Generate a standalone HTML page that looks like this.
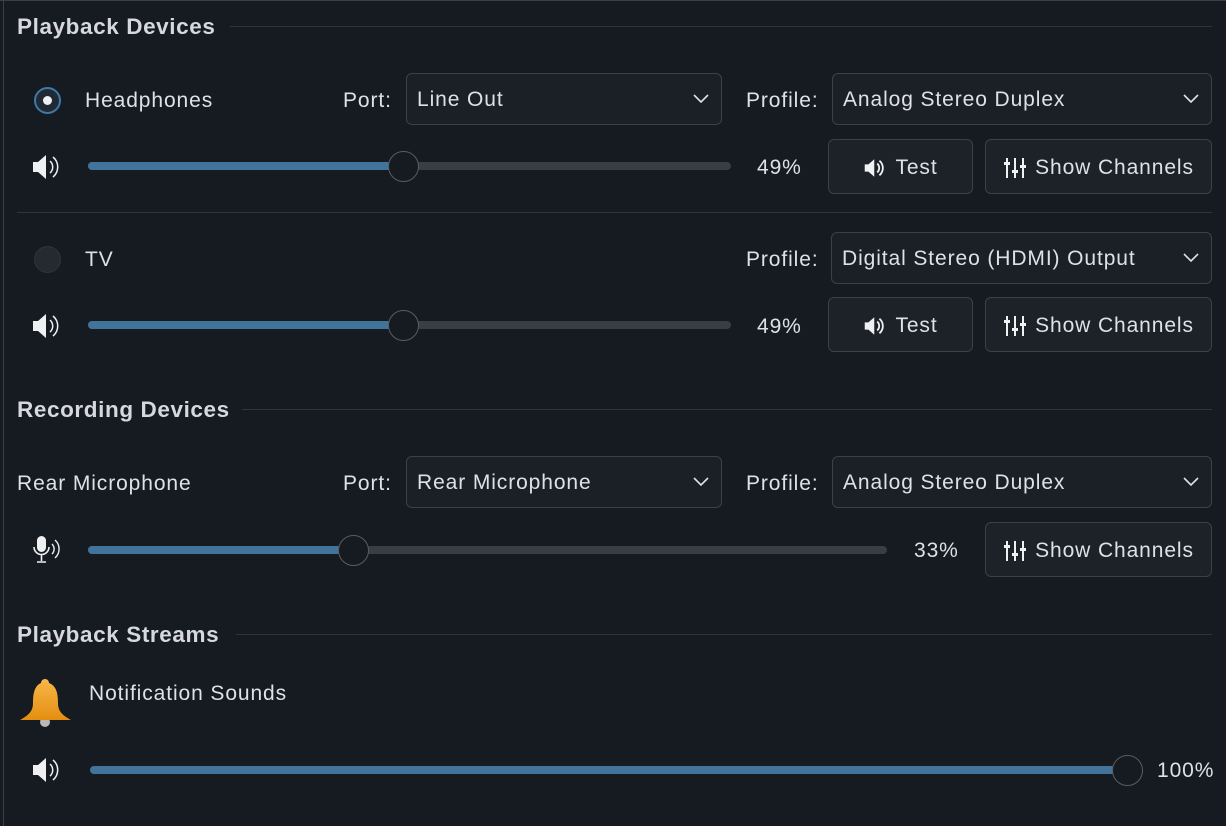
<!DOCTYPE html>
<html><head><style>
*{margin:0;padding:0;box-sizing:border-box}
body{width:1226px;height:826px;background:#161a21;position:relative;overflow:hidden;font-family:"Liberation Sans",sans-serif;color:#dfe1e4;font-size:21px;letter-spacing:0.9px}
.a{position:absolute}
.t{position:absolute;line-height:30px;white-space:nowrap;margin-top:1px}
.h{font-weight:bold;color:#d6d8db;font-size:22.5px;letter-spacing:0.6px}
.line{position:absolute;height:1px;background:#2f3640}
.combo{position:absolute;border:1px solid #3c4149;border-radius:6px;background:#1b1f26}
.combo span{position:absolute;left:10px;top:50%;transform:translateY(-50%);white-space:nowrap;margin-top:1px}
.combo svg{position:absolute;right:12px;top:50%;margin-top:-5px}
.btn{position:absolute;border:1px solid #3c4149;border-radius:6px;background:#1d2128;display:flex;align-items:center;justify-content:center;gap:8px;white-space:nowrap;padding-top:2px}
.groove{position:absolute;height:8px;border-radius:4px;background:#3a3d43}
.fill{position:absolute;height:8px;border-radius:4px;background:#41739b}
.handle{position:absolute;width:31px;height:31px;border-radius:50%;background:#161a21;border:1.5px solid #595d63}
</style></head><body>
<div class="a" style="left:0;top:0;width:4px;height:826px;border-right:1px solid #3a3f46"></div>
<div class="a" style="left:0;top:0;width:1226px;height:1px;background:#3a3f46"></div>

<div class="t h" style="left:17px;top:11px">Playback Devices</div>
<div class="line" style="left:230px;top:26px;width:982px"></div>

<div class="a" style="left:34px;top:87px;width:27px;height:27px;border-radius:50%;border:2px solid #3d7aa6;background:#1f2a35"></div>
<div class="a" style="left:43px;top:96px;width:9px;height:9px;border-radius:50%;background:#eef0f2"></div>
<div class="t" style="left:85px;top:85px">Headphones</div>
<div class="t" style="left:343px;top:85px">Port:</div>
<div class="combo" style="left:406px;top:73px;width:316px;height:52px"><span>Line Out</span><svg width="16" height="10"><path d="M1 1L8 8L15 1" stroke="#dfe1e4" stroke-width="1.6" fill="none"/></svg></div>
<div class="t" style="left:746px;top:85px">Profile:</div>
<div class="combo" style="left:832px;top:73px;width:380px;height:52px"><span>Analog Stereo Duplex</span><svg width="16" height="10"><path d="M1 1L8 8L15 1" stroke="#dfe1e4" stroke-width="1.6" fill="none"/></svg></div>

<svg class="a" style="left:31px;top:152px" width="32" height="30" viewBox="0 0 32 30"><path d="M2 10h5l8-7v24l-8-7H2z" fill="#eef0f2"/><path d="M19 9a8 8 0 0 1 0 12M22 5a13 13 0 0 1 0 20" stroke="#eef0f2" stroke-width="1.5" fill="none"/></svg>
<div class="groove" style="left:88px;top:162px;width:643px"></div>
<div class="fill" style="left:88px;top:162px;width:315px"></div>
<div class="handle" style="left:388px;top:151px"></div>
<div class="t" style="left:757px;top:152px">49%</div>
<div class="btn" style="left:828px;top:139px;width:145px;height:55px"><svg width="24" height="22" viewBox="0 0 32 30"><path d="M2 10h5l8-7v24l-8-7H2z" fill="#eef0f2"/><path d="M19 9a8 8 0 0 1 0 12M22 5a13 13 0 0 1 0 20" stroke="#eef0f2" stroke-width="2.5" fill="none"/></svg>Test</div>
<div class="btn" style="left:985px;top:139px;width:227px;height:55px"><svg width="24" height="22" viewBox="0 0 24 22"><path d="M4 1v20M12 1v20M20 1v20" stroke="#eef0f2" stroke-width="2"/><rect x="1" y="5" width="6" height="3" fill="#eef0f2"/><rect x="9" y="13" width="6" height="3" fill="#eef0f2"/><rect x="17" y="8" width="6" height="3" fill="#eef0f2"/></svg>Show Channels</div>

<div class="line" style="left:17px;top:212px;width:1195px;background:#2c3540"></div>

<div class="a" style="left:34px;top:246px;width:27px;height:27px;border-radius:50%;border:1px solid #30343b;background:#252930"></div>
<div class="t" style="left:85px;top:244px">TV</div>
<div class="t" style="left:746px;top:244px">Profile:</div>
<div class="combo" style="left:831px;top:232px;width:381px;height:52px"><span>Digital Stereo (HDMI) Output</span><svg width="16" height="10"><path d="M1 1L8 8L15 1" stroke="#dfe1e4" stroke-width="1.6" fill="none"/></svg></div>

<svg class="a" style="left:31px;top:311px" width="32" height="30" viewBox="0 0 32 30"><path d="M2 10h5l8-7v24l-8-7H2z" fill="#eef0f2"/><path d="M19 9a8 8 0 0 1 0 12M22 5a13 13 0 0 1 0 20" stroke="#eef0f2" stroke-width="1.5" fill="none"/></svg>
<div class="groove" style="left:88px;top:321px;width:643px"></div>
<div class="fill" style="left:88px;top:321px;width:315px"></div>
<div class="handle" style="left:388px;top:310px"></div>
<div class="t" style="left:757px;top:311px">49%</div>
<div class="btn" style="left:828px;top:297px;width:145px;height:55px"><svg width="24" height="22" viewBox="0 0 32 30"><path d="M2 10h5l8-7v24l-8-7H2z" fill="#eef0f2"/><path d="M19 9a8 8 0 0 1 0 12M22 5a13 13 0 0 1 0 20" stroke="#eef0f2" stroke-width="2.5" fill="none"/></svg>Test</div>
<div class="btn" style="left:985px;top:297px;width:227px;height:55px"><svg width="24" height="22" viewBox="0 0 24 22"><path d="M4 1v20M12 1v20M20 1v20" stroke="#eef0f2" stroke-width="2"/><rect x="1" y="5" width="6" height="3" fill="#eef0f2"/><rect x="9" y="13" width="6" height="3" fill="#eef0f2"/><rect x="17" y="8" width="6" height="3" fill="#eef0f2"/></svg>Show Channels</div>

<div class="t h" style="left:17px;top:394px">Recording Devices</div>
<div class="line" style="left:242px;top:409px;width:970px"></div>

<div class="t" style="left:17px;top:468px">Rear Microphone</div>
<div class="t" style="left:343px;top:468px">Port:</div>
<div class="combo" style="left:406px;top:456px;width:316px;height:52px"><span>Rear Microphone</span><svg width="16" height="10"><path d="M1 1L8 8L15 1" stroke="#dfe1e4" stroke-width="1.6" fill="none"/></svg></div>
<div class="t" style="left:746px;top:468px">Profile:</div>
<div class="combo" style="left:832px;top:456px;width:380px;height:52px"><span>Analog Stereo Duplex</span><svg width="16" height="10"><path d="M1 1L8 8L15 1" stroke="#dfe1e4" stroke-width="1.6" fill="none"/></svg></div>

<svg class="a" style="left:31px;top:535px" width="32" height="30" viewBox="0 0 32 30"><rect x="6" y="1" width="9" height="16" rx="4.5" fill="#eef0f2"/><path d="M3 12a7.5 7.5 0 0 0 15 0M10.5 20v6M6 27h9" stroke="#eef0f2" stroke-width="1.6" fill="none"/><path d="M21 9a7 7 0 0 1 0 10M24 5a12 12 0 0 1 0 18" stroke="#eef0f2" stroke-width="1.4" fill="none"/></svg>
<div class="groove" style="left:88px;top:546px;width:799px"></div>
<div class="fill" style="left:88px;top:546px;width:265px"></div>
<div class="handle" style="left:338px;top:535px"></div>
<div class="t" style="left:914px;top:535px">33%</div>
<div class="btn" style="left:985px;top:522px;width:227px;height:55px"><svg width="24" height="22" viewBox="0 0 24 22"><path d="M4 1v20M12 1v20M20 1v20" stroke="#eef0f2" stroke-width="2"/><rect x="1" y="5" width="6" height="3" fill="#eef0f2"/><rect x="9" y="13" width="6" height="3" fill="#eef0f2"/><rect x="17" y="8" width="6" height="3" fill="#eef0f2"/></svg>Show Channels</div>

<div class="t h" style="left:17px;top:619px">Playback Streams</div>
<div class="line" style="left:236px;top:634px;width:976px"></div>

<svg class="a" style="left:19px;top:678px" width="54" height="52" viewBox="0 0 54 52"><defs><linearGradient id="g" x1="0" y1="0" x2="0" y2="1"><stop offset="0" stop-color="#f7b84a"/><stop offset="1" stop-color="#e48e10"/></linearGradient></defs><circle cx="26" cy="44" r="5" fill="#b8b8b8"/><path d="M22 5a4 4 0 0 1 8 0c8 3 9 12 9 20 0 8 4 12 13 17H1c9-5 13-9 13-17 0-8 1-17 8-20z" fill="url(#g)"/></svg>
<div class="t" style="left:89px;top:678px">Notification Sounds</div>

<svg class="a" style="left:31px;top:755px" width="32" height="30" viewBox="0 0 32 30"><path d="M2 10h5l8-7v24l-8-7H2z" fill="#eef0f2"/><path d="M19 9a8 8 0 0 1 0 12M22 5a13 13 0 0 1 0 20" stroke="#eef0f2" stroke-width="1.5" fill="none"/></svg>
<div class="fill" style="left:90px;top:766px;width:1037px"></div>
<div class="handle" style="left:1112px;top:755px"></div>
<div class="t" style="left:1157px;top:755px">100%</div>
</body></html>
